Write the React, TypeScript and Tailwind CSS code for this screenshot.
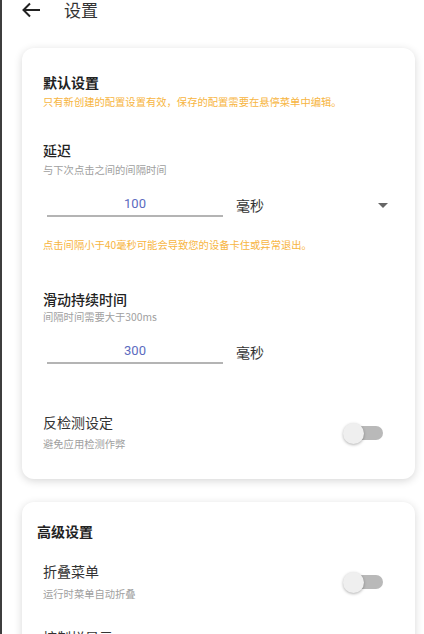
import React from "react";

const font = { fontFamily: '"Noto Sans CJK SC", "Noto Sans", Roboto, sans-serif' };

function Toggle() {
  return (
    <div className="relative w-[40px] h-[22px] flex items-center shrink-0">
      <div className="absolute left-[4px] right-0 h-[14px] rounded-full bg-[#b9b9b9]" />
      <div className="absolute left-0 w-[21px] h-[21px] rounded-full bg-[#efefef] shadow-[0_1px_3px_rgba(0,0,0,0.3)]" />
    </div>
  );
}

function Field({ value, dropdown }: { value: string; dropdown?: boolean }) {
  return (
    <div className="flex items-center ml-[4px] h-[24px]">
      <div className="w-[176px] h-[24px] border-b-2 border-[#b4b4b4] flex items-center justify-center text-[13px] text-[#5c6bc0]" style={{ fontFamily: "Roboto, sans-serif" }}>
        {value}
      </div>
      <div className="ml-[13px] text-[14px] text-[#333] leading-[20px]">毫秒</div>
      {dropdown && (
        <div className="ml-auto mr-[3px] w-0 h-0 border-l-[5px] border-r-[5px] border-t-[5px] border-l-transparent border-r-transparent border-t-[#666]" />
      )}
    </div>
  );
}

export default function App() {
  return (
    <div className="flex w-[424px] h-[634px] overflow-hidden bg-white" style={font}>
      <div className="w-[2px] shrink-0 bg-[#3d3d3d]" />
      <div className="flex-1 flex flex-col">
        <div className="flex items-center h-[20px] pl-[20px]">
          <svg width="18" height="16" viewBox="0 0 18 16" fill="none" stroke="#222" strokeWidth="2" strokeLinecap="square">
            <path d="M17 8H2" />
            <path d="M8 1.5L1.5 8L8 14.5" strokeLinecap="butt" />
          </svg>
          <div className="ml-[24px] text-[17px] text-[#333] leading-[20px]">设置</div>
        </div>

        <div className="ml-[20px] mr-[9px] mt-[28px] rounded-[12px] bg-white shadow-[0_2px_8px_rgba(0,0,0,0.16)] pt-[24px] pb-[28px] px-[21px] flex flex-col">
          <div className="text-[14px] font-bold text-[#222] leading-[20px]">默认设置</div>
          <div className="mt-[2px] text-[10.3px] text-[#f7b541] leading-[16px]">只有新创建的配置设置有效，保存的配置需要在悬停菜单中编辑。</div>

          <div className="mt-[30px] text-[14px] font-medium text-[#222] leading-[20px]">延迟</div>
          <div className="mt-[3px] text-[10.3px] text-[#a0a0a0] leading-[14px]">与下次点击之间的间隔时间</div>
          <div className="mt-[16px] pr-[3px]">
            <Field value="100" dropdown />
          </div>
          <div className="mt-[21px] text-[10.3px] text-[#f7b541] leading-[14px]">点击间隔小于40毫秒可能会导致您的设备卡住或异常退出。</div>

          <div className="mt-[37px] text-[14px] font-medium text-[#222] leading-[20px]">滑动持续时间</div>
          <div className="mt-[1px] text-[10.3px] text-[#a0a0a0] leading-[14px]">间隔时间需要大于300ms</div>
          <div className="mt-[16px]">
            <Field value="300" />
          </div>

          <div className="mt-[48px] flex items-start">
            <div className="flex flex-col flex-1">
              <div className="text-[14px] text-[#333] leading-[20px]">反检测设定</div>
              <div className="mt-[5px] text-[10.3px] text-[#a0a0a0] leading-[14px]">避免应用检测作弊</div>
            </div>
            <div className="mt-[10px] mr-[11px]">
              <Toggle />
            </div>
          </div>
        </div>

        <div className="ml-[20px] mr-[9px] mt-[23px] rounded-[12px] bg-white shadow-[0_2px_8px_rgba(0,0,0,0.16)] pt-[19px] pb-[20px] pl-[15px] pr-[21px] flex flex-col">
          <div className="text-[14px] font-bold text-[#222] leading-[20px]">高级设置</div>
          <div className="mt-[20px] pl-[6px] flex items-start">
            <div className="flex flex-col flex-1">
              <div className="text-[14px] text-[#333] leading-[20px]">折叠菜单</div>
              <div className="mt-[6px] text-[10.3px] text-[#a0a0a0] leading-[14px]">运行时菜单自动折叠</div>
            </div>
            <div className="mt-[10px] mr-[11px]">
              <Toggle />
            </div>
          </div>
          <div className="mt-[26px] pl-[6px] text-[14px] text-[#333] leading-[20px]">控制栏显示</div>
        </div>
      </div>
    </div>
  );
}
